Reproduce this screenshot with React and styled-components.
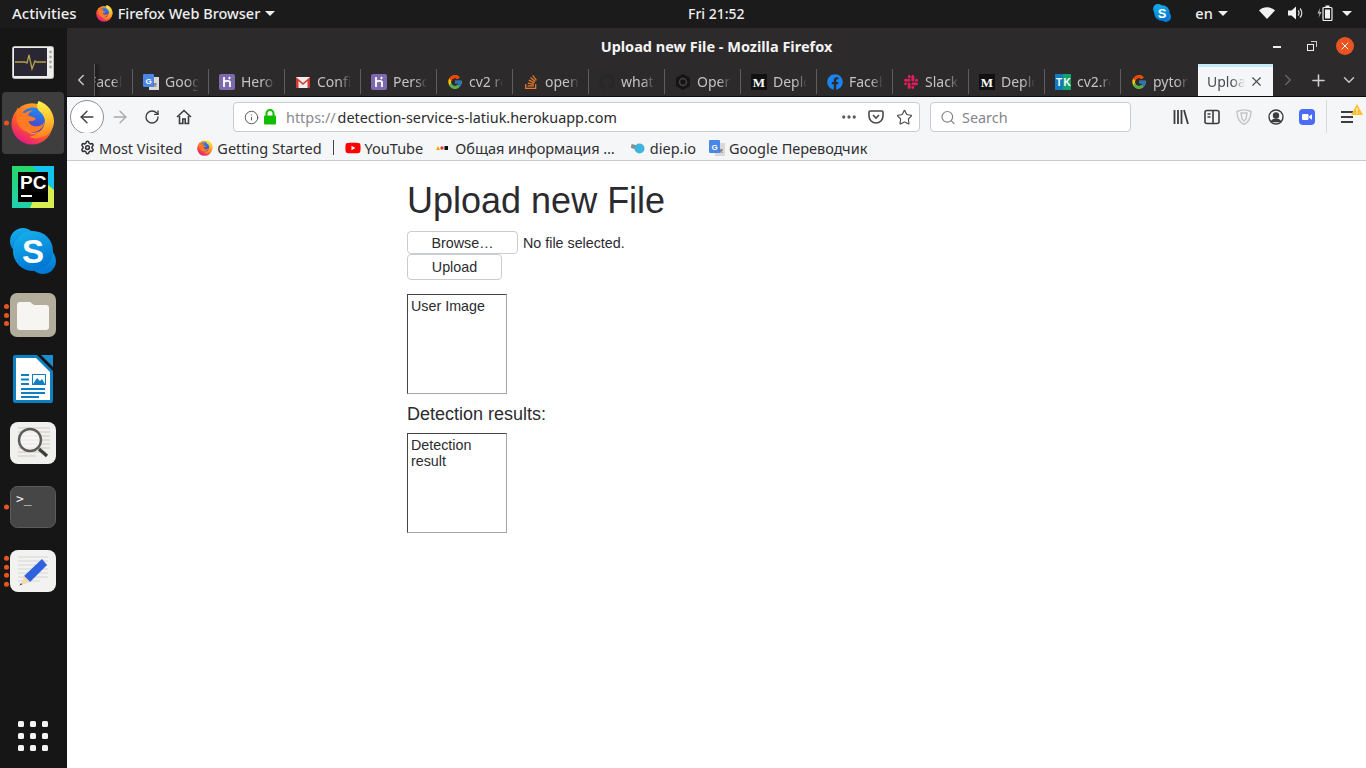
import React from 'react';
import styled, { createGlobalStyle } from 'styled-components';
import {
  ArrowLeft, ArrowRight, RotateCw, Info, Star, Search, Ellipsis, X, Plus,
  ChevronDown, ChevronLeft, ChevronRight, Settings,
} from 'lucide-react';
import { FcGoogle } from 'react-icons/fc';
import { FaFacebook, FaStackOverflow, FaGithub, FaSlack, FaYoutube } from 'react-icons/fa';

const UI_FONT = '"Noto Sans", "Open Sans", sans-serif';
const PAGE_FONT = '"Liberation Sans", Arial, sans-serif';

const GlobalStyle = createGlobalStyle`
  html, body { margin: 0; padding: 0; height: 100%; background: #fff; overflow: hidden; }
  #root { height: 100%; }
  * { box-sizing: border-box; }
`;

/* ---------- drawn logos ---------- */

const FirefoxLogo = ({ size = 44, id = 'ff' }) => (
  <svg width={size} height={size} viewBox="0 0 48 48">
    <defs>
      <linearGradient id={`${id}a`} x1="0.7" y1="0.1" x2="0.2" y2="0.95">
        <stop offset="0" stopColor="#ffa31f" />
        <stop offset="0.55" stopColor="#ff5a2a" />
        <stop offset="1" stopColor="#e31587" />
      </linearGradient>
      <linearGradient id={`${id}b`} x1="0.6" y1="0" x2="0.3" y2="1">
        <stop offset="0" stopColor="#1d8cf0" />
        <stop offset="1" stopColor="#5a2bc9" />
      </linearGradient>
      <linearGradient id={`${id}c`} x1="0.4" y1="0" x2="0.5" y2="1">
        <stop offset="0" stopColor="#fff44f" />
        <stop offset="0.55" stopColor="#ffbd2e" />
        <stop offset="1" stopColor="#ff7a1f" />
      </linearGradient>
    </defs>
    <circle cx="23" cy="25" r="22.500" fill={`url(#${id}a)`} />
    <circle cx="24" cy="21" r="14" fill={`url(#${id}b)`} />
    <path d="M7 7c1 4 4 6 8 6 3-2 6-3 9-3-3 2-6 4-5 6 2 1 6 1 8 3-1 3-5 3-8 3 1 4 7 7 12 5 3-1 5-3 6-5-1 7-8 13-16 12C12 34 6 26 6 18c0-4 0-8 1-11z" fill="#ff7a22" />
    <path d="M30 0C27 6 29 10 33 13 37 17 38 22 36 27 33 34 27 38 20 39 30 44 46 38 47 23 47 12 40 3 30 0z" fill={`url(#${id}c)`} />
    <path d="M15 30c4 5 10 6 16 3-4 4-11 5-16-3z" fill="#ffcf3a" opacity=".7" />
  </svg>
);

const MonitorLogo = () => (
  <svg width="42" height="33" viewBox="0 0 42 33">
    <rect x="0.5" y="0.5" width="41" height="32" rx="2" fill="#eeeeec" stroke="#bdbdb8" />
    <rect x="2" y="2" width="33" height="28" fill="#2a2735" />
    <path d="M3 16h10l2 1 2-8 3 14 3-8 1 1h10" fill="none" stroke="#b5a24a" strokeWidth="1.3" />
    <circle cx="38.5" cy="6" r="1.4" fill="#a9a9a5" />
    <circle cx="38.5" cy="11" r="1.4" fill="#a9a9a5" />
    <circle cx="38.5" cy="16" r="1.4" fill="#a9a9a5" />
    <circle cx="38.5" cy="21" r="1.4" fill="#a9a9a5" />
  </svg>
);

const PyCharmLogo = () => (
  <svg width="42" height="42" viewBox="0 0 42 42">
    <defs>
      <linearGradient id="pcg" x1="0" y1="1" x2="0.2" y2="0">
        <stop offset="0" stopColor="#1fd0b0" />
        <stop offset="1" stopColor="#27d868" />
      </linearGradient>
    </defs>
    <rect width="42" height="42" fill="url(#pcg)" />
    <path d="M20 0h22v24z" fill="#13c4ea" />
    <path d="M30 14l12 10v18H18z" fill="#d8ee50" />
    <rect x="6" y="6" width="30" height="30" fill="#000" />
    <text x="8" y="23" fontFamily={PAGE_FONT} fontWeight="700" fontSize="19" fill="#fff">PC</text>
    <rect x="9" y="29" width="11" height="2" fill="#fff" />
  </svg>
);

const SkypeLogo = ({ size = 46, id = 'sk' }) => (
  <svg width={size} height={size} viewBox="0 0 46 46">
    <defs>
      <linearGradient id={id} x1="0" y1="0" x2="0.4" y2="1">
        <stop offset="0" stopColor="#19b5ee" />
        <stop offset="1" stopColor="#0078d4" />
      </linearGradient>
    </defs>
    <circle cx="13" cy="13" r="13" fill={`url(#${id})`} />
    <circle cx="33" cy="33" r="13" fill={`url(#${id})`} />
    <circle cx="23" cy="23" r="20" fill={`url(#${id})`} />
    <text x="23" y="35" textAnchor="middle" fontFamily={PAGE_FONT} fontWeight="700" fontSize="33" fill="#fff">S</text>
  </svg>
);

const FilesLogo = () => (
  <svg width="46" height="44" viewBox="0 0 46 44">
    <rect width="46" height="44" rx="7" fill="#b3ad9c" />
    <path d="M7 12a3 3 0 013-3h10l4 3h12a3 3 0 013 3v19a3 3 0 01-3 3H10a3 3 0 01-3-3z" fill="#f7f5f2" />
  </svg>
);

const WriterLogo = () => (
  <svg width="40" height="48" viewBox="0 0 40 48">
    <path d="M2 0h22l16 16v30a2 2 0 01-2 2H2a2 2 0 01-2-2V2a2 2 0 012-2z" fill="#0f7fc4" />
    <path d="M3 3h20l14 14v28H3z" fill="#fff" />
    <path d="M28 0h12v12z" fill="#1a8ccf" />
    <path d="M8 19h8v2H8zM8 23.500h8v2H8zM8 28h8v2H8zM8 33h24v2H8zM8 37h24v2H8zM8 41h18v2H8z" fill="#0f7fc4" />
    <rect x="19.500" y="19.500" width="13" height="10" fill="#fff" stroke="#0f7fc4" />
    <path d="M20 29l4-6 3 3 2-2 3 5z" fill="#0f7fc4" />
  </svg>
);

const LensLogo = () => (
  <svg width="46" height="42" viewBox="0 0 46 42">
    <rect width="46" height="42" rx="8" fill="#f0f0ee" />
    <path d="M8 6h32M8 10h32M8 14h32M8 18h32M8 22h32M8 26h32M8 30h28M8 34h18" stroke="#cfcabc" strokeWidth="1" />
    <circle cx="20" cy="18" r="11" fill="#fafafa" fillOpacity=".6" stroke="#5c5c5a" strokeWidth="2.4" />
    <path d="M29 27l8 7" stroke="#3f3f3d" strokeWidth="3.400" />
  </svg>
);

const TerminalLogo = () => (
  <svg width="46" height="42" viewBox="0 0 46 42">
    <rect x="0.5" y="0.5" width="45" height="41" rx="7" fill="#464646" stroke="#5c5c5c" />
    <text x="6" y="17" fontFamily='"DejaVu Sans Mono", monospace' fontSize="13" fill="#eee">&gt;_</text>
  </svg>
);

const GeditLogo = () => (
  <svg width="46" height="42" viewBox="0 0 46 42">
    <rect width="46" height="42" rx="8" fill="#f2f2f0" />
    <path d="M8 7h30M8 11h30M8 15h30M8 19h30M8 23h30M8 27h30M8 31h22" stroke="#d4d4d2" strokeWidth="1" />
    <path d="M32 9l5 6-17 17-6-6z" fill="#2f62dd" />
    <path d="M14 26l6 6-9 3z" fill="#f7d7ae" />
    <path d="M11 33l-1.500 2.500 2.500-1z" fill="#333" />
  </svg>
);

const HerokuIcon = () => (
  <svg width="16" height="16" viewBox="0 0 16 16">
    <rect width="16" height="16" rx="2" fill="#7f69ae" />
    <path d="M5 3v10M5 8c2-1.500 6-1.500 6 .5V13M11 3l-1 2" fill="none" stroke="#fff" strokeWidth="1.800" />
  </svg>
);

const GmailIcon = () => (
  <svg width="16" height="16" viewBox="0 0 16 16">
    <rect x="1" y="3" width="14" height="11" fill="#eee" />
    <path d="M1 14V3l7 6 7-6v11h-2.500V7L8 11 3.500 7v7z" fill="#d33a2f" />
  </svg>
);

const TranslateIcon = ({ size = 16 }) => (
  <svg width={size} height={size} viewBox="0 0 16 16">
    <rect x="6" y="3" width="10" height="13" fill="#d9d9d9" />
    <rect width="11" height="13" rx="1" fill="#4a86e8" />
    <text x="5.500" y="10" textAnchor="middle" fontFamily={PAGE_FONT} fontWeight="700" fontSize="8" fill="#fff">G</text>
    <path d="M10 10h4M12 9v1M13 10l-2.500 3M11 10.500l2.500 2.500" stroke="#666" strokeWidth=".8" fill="none" />
  </svg>
);

const MediumIcon = () => (
  <svg width="16" height="16" viewBox="0 0 16 16">
    <rect width="16" height="16" fill="#111" />
    <text x="8" y="12.500" textAnchor="middle" fontFamily='"Liberation Serif", serif' fontWeight="700" fontSize="13" fill="#fff">M</text>
  </svg>
);

const TkIcon = () => (
  <svg width="16" height="16" viewBox="0 0 16 16">
    <rect width="8" height="16" fill="#1479bd" />
    <rect x="8" width="8" height="16" fill="#12a36b" />
    <text x="4" y="12" textAnchor="middle" fontFamily={PAGE_FONT} fontWeight="700" fontSize="10" fill="#fff">T</text>
    <text x="12" y="12" textAnchor="middle" fontFamily={PAGE_FONT} fontWeight="700" fontSize="10" fill="#fff">K</text>
  </svg>
);

const OpenIcon = () => (
  <svg width="16" height="16" viewBox="0 0 16 16">
    <path d="M8 0l7 4v8l-7 4-7-4V4z" fill="#151515" />
    <circle cx="8" cy="8" r="3.500" fill="none" stroke="#444" strokeWidth="1.500" />
  </svg>
);

const HomeIcon = () => (
  <svg width="16" height="16" viewBox="0 0 16 16" fill="none" stroke="#3d3d3f" strokeWidth="1.600">
    <path d="M1 8l7-6.500L15 8" />
    <path d="M3.500 7v7.500h3.300V10h2.400v4.500h3.300V7" />
  </svg>
);

const PadlockIcon = () => (
  <svg width="14" height="16" viewBox="0 0 14 16">
    <path d="M3.500 7V4.500a3.500 3.500 0 017 0V7" fill="none" stroke="#12bc00" strokeWidth="2" />
    <rect x="1" y="6.500" width="12" height="9" rx="1" fill="#12bc00" />
  </svg>
);

const PocketIcon = () => (
  <svg width="16" height="16" viewBox="0 0 16 16" fill="none" stroke="#4a4a4c" strokeWidth="1.600">
    <path d="M2 2h12a1 1 0 011 1v4a7 7 0 01-14 0V3a1 1 0 011-1z" />
    <path d="M5 6l3 3 3-3" />
  </svg>
);

const LibraryIcon = () => (
  <svg width="16" height="16" viewBox="0 0 16 16" stroke="#3d3d3f" strokeWidth="1.800" fill="none">
    <path d="M1.500 1v14M5 1v14M8.500 1v14M11 1l4 14" />
  </svg>
);

const SidebarIcon = () => (
  <svg width="16" height="16" viewBox="0 0 16 16" fill="none" stroke="#3d3d3f" strokeWidth="1.600">
    <rect x="1" y="1.500" width="14" height="13" rx="2" />
    <path d="M9 1.500v13M3.500 5h3M3.500 8h3" />
  </svg>
);

const ShieldIcon = () => (
  <svg width="16" height="16" viewBox="0 0 16 16" fill="none" stroke="#c4c4c4" strokeWidth="1.400">
    <path d="M1 2.500C5 .5 11 .5 15 2.500c0 6-2 10.500-7 13C3 13 1 8.500 1 2.500z" />
    <path d="M5 4h6l-1 6-2 2-2-2z" />
  </svg>
);

const AccountIcon = () => (
  <svg width="16" height="16" viewBox="0 0 16 16" fill="none" stroke="#3d3d3f" strokeWidth="1.400">
    <circle cx="8" cy="8" r="7" />
    <circle cx="8" cy="6.500" r="2.500" fill="#3d3d3f" />
    <path d="M3.500 12.500C5 9.500 11 9.500 12.500 12.500z" fill="#3d3d3f" />
  </svg>
);

const ZoomIcon = () => (
  <svg width="16" height="16" viewBox="0 0 16 16">
    <rect width="16" height="16" rx="4" fill="#4a6cf7" />
    <rect x="3" y="5" width="6.500" height="6" rx="1.200" fill="#fff" />
    <path d="M10.200 7.200l2.800-2v5.600l-2.800-2z" fill="#fff" />
  </svg>
);

const HamburgerIcon = () => (
  <svg width="14" height="14" viewBox="0 0 14 14" stroke="#3d3d3f" strokeWidth="1.800">
    <path d="M1 2h12M1 7h12M1 12h12" />
  </svg>
);

const WarnBadge = () => (
  <svg width="12" height="11" viewBox="0 0 12 11">
    <path d="M6 0l6 11H0z" fill="#ffbf2e" />
    <path d="M6 4v3.500M6 8.500v1.200" stroke="#fff" strokeWidth="1.100" />
  </svg>
);

const WifiIcon = () => (
  <svg width="16" height="12" viewBox="0 0 16 12">
    <path d="M0 3.500C4.500-.8 11.500-.8 16 3.500L8 12z" fill="#f2f2f2" />
  </svg>
);

const SpeakerIcon = () => (
  <svg width="16" height="14" viewBox="0 0 16 14">
    <path d="M0 4.500h3.500L8 .5v13L3.500 9.500H0z" fill="#f2f2f2" />
    <path d="M10 4.500a3.500 3.500 0 010 5M12 2.500a6.500 6.500 0 010 9" fill="none" stroke="#dcdcdc" strokeWidth="1.200" />
  </svg>
);

const BatteryIcon = () => (
  <svg width="16" height="16" viewBox="0 0 16 16">
    <path d="M3 3L0.500 8.500H2.500L1.500 13L4.500 7H2.500z" fill="#bbb" />
    <rect x="6" y="2.500" width="9" height="13" rx="1" fill="none" stroke="#f2f2f2" strokeWidth="1.200" />
    <rect x="8.500" y="0.500" width="4" height="2" fill="#f2f2f2" />
    <rect x="8" y="4.500" width="5" height="9" fill="#f2f2f2" />
  </svg>
);

const DiepIcon = () => (
  <svg width="15" height="12" viewBox="0 0 15 12">
    <rect x="0" y="3" width="8" height="4" fill="#8c8c8c" transform="rotate(15 4 5)" />
    <circle cx="8.500" cy="6.500" r="5" fill="#3fb4dc" />
  </svg>
);

const DotsIcon = () => (
  <svg width="15" height="6" viewBox="0 0 15 6">
    <path d="M0 5l2-4 2 4z" fill="#f4a300" />
    <circle cx="6" cy="3" r="1.700" fill="#e33" />
    <rect x="8.500" y="1" width="3.500" height="4" fill="#111" />
  </svg>
);

/* ---------- desktop shell ---------- */

const Desktop = styled.div`
  display: flex;
  flex-direction: column;
  width: 1366px;
  height: 768px;
  overflow: hidden;
  background: #fff;
`;

const TopBar = styled.header`
  display: flex;
  align-items: center;
  flex: 0 0 28px;
  padding: 0 15px 2px 12px;
  background: #1b1b1b;
  color: #efefef;
  font: 500 14.500px ${UI_FONT};
  white-space: nowrap;
`;

const TopLabel = styled.span`
  flex: 0 0 64px;
  font-size: 15px;
`;

const TopMenu = styled.span`
  display: flex;
  align-items: center;
  flex: none;
  gap: ${(p) => p.$gap || 5}px;
  margin-left: ${(p) => p.$left || 0}px;
`;

const AppMenu = styled(TopMenu)`
  flex: 0 0 179px;
`;

const Clock = styled.span`
  flex: 0 0 58px;
  margin-left: 412px;
  text-align: center;
  font-size: 14px;
`;

const Caret = styled.i`
  display: block;
  flex: none;
  width: 0;
  height: 0;
  margin-left: ${(p) => p.$left || 0}px;
  border-left: 5px solid transparent;
  border-right: 5px solid transparent;
  border-top: 5px solid #efefef;
`;

const Body = styled.div`
  display: flex;
  flex: 1;
  min-height: 0;
`;

const Dock = styled.nav`
  display: flex;
  flex-direction: column;
  align-items: center;
  flex: 0 0 67px;
  background: #161616;
  padding-bottom: 17px;
`;

const DockSlot = styled.div`
  position: relative;
  display: flex;
  align-items: center;
  justify-content: center;
  flex: 0 0 64px;
  width: 62px;
  margin-right: 2px;
  &:first-child {
    flex-basis: 63px;
    padding-top: 5px;
  }
`;

const ActiveTile = styled.div`
  display: flex;
  align-items: center;
  justify-content: center;
  width: 62px;
  height: 62px;
  border-radius: 4px;
  background: #3e3e3e;
`;

const RunDots = styled.div`
  position: absolute;
  left: 2px;
  top: 50%;
  transform: translateY(-50%);
  display: flex;
  flex-direction: column;
  gap: 3.500px;
`;

const RunDot = styled.i`
  display: block;
  width: 5px;
  height: 5px;
  border-radius: 50%;
  background: #e95420;
`;

const AppGrid = styled.div`
  display: grid;
  grid-template-columns: repeat(3, 6px);
  gap: 6px;
  margin-top: auto;
  margin-right: 1px;
  i {
    display: block;
    width: 6px;
    height: 6px;
    border-radius: 1.500px;
    background: #f4f4f4;
  }
`;

const Browser = styled.main`
  display: flex;
  flex-direction: column;
  flex: 1;
  min-width: 0;
`;

const TitleBar = styled.div`
  position: relative;
  display: flex;
  align-items: center;
  justify-content: center;
  flex: 0 0 36px;
  background: #2c2a2b;
  color: #f4f4f4;
  font: 700 14.500px ${UI_FONT};
`;

const WindowButtons = styled.div`
  position: absolute;
  right: 12px;
  top: 9px;
  display: flex;
  align-items: center;
  gap: 21px;
`;

const MinimizeMark = styled.i`
  display: block;
  width: 8px;
  height: 1.500px;
  margin-top: 2px;
  background: #eee;
`;

const RestoreMark = styled.i`
  position: relative;
  display: block;
  width: 7px;
  height: 7px;
  margin: 2px 1px 0 5px;
  border: 1.500px solid #eee;
  &::after {
    content: '';
    position: absolute;
    right: -3.500px;
    top: -3.500px;
    width: 5px;
    height: 5px;
    border-top: 1px solid #ccc;
    border-right: 1px solid #ccc;
  }
`;

const CloseDot = styled.span`
  display: flex;
  align-items: center;
  justify-content: center;
  width: 18px;
  height: 18px;
  border-radius: 50%;
  background: #e95420;
  color: #fff;
`;

const TabBar = styled.div`
  display: flex;
  align-items: stretch;
  flex: 0 0 33px;
  background: #2c2a2b;
  border-bottom: 1px solid #0c0c0c;
  overflow: hidden;
`;

const ScrollButton = styled.div`
  display: flex;
  align-items: center;
  justify-content: center;
  flex: 0 0 ${(p) => p.$w}px;
  color: ${(p) => p.$color || '#c8c8c8'};
  border-right: ${(p) => (p.$edge ? '1px solid #5e5e5e' : '0')};
  box-shadow: ${(p) => (p.$edge ? '3px 0 4px rgba(0,0,0,.35)' : 'none')};
  z-index: 1;
`;

const Tab = styled.div`
  display: flex;
  align-items: center;
  gap: 6px;
  flex: 0 0 ${(p) => p.$w || 76}px;
  padding: 0 9px 0 10px;
  margin: ${(p) => (p.$active ? '0' : '5px 0 2px')};
  border-right: ${(p) => (p.$plain ? '0' : '1px solid #5e5e5e')};
  color: #c4c4c4;
  font: 14px ${UI_FONT};
  overflow: hidden;
`;

const ClippedTab = styled(Tab)`
  padding: 0 10px 0 0;
`;

const ActiveTab = styled(Tab)`
  gap: 4px;
  padding: 0 9px;
  background: #f5f6f7;
  border-top: 3px solid #c6eafa;
  border-right: 0;
  color: #4a4a4f;
  svg { flex: none; }
`;

const TabIcon = styled.span`
  display: flex;
  flex: none;
  width: 16px;
  height: 16px;
  color: ${(p) => p.$color || 'inherit'};
`;

const TabTitle = styled.span`
  flex: 1;
  min-width: 0;
  white-space: nowrap;
  overflow: hidden;
  text-indent: ${(p) => p.$shift || 0}px;
  -webkit-mask-image: linear-gradient(to right, #000 65%, transparent);
  mask-image: linear-gradient(to right, #000 65%, transparent);
`;

const NavBar = styled.div`
  display: flex;
  align-items: center;
  flex: 0 0 36px;
  min-height: 0;
  padding: 4px 0 0 3px;
  background: #f5f6f7;
`;

const BackButton = styled.div`
  display: flex;
  align-items: center;
  justify-content: center;
  flex: none;
  width: 34px;
  height: 34px;
  border-radius: 50%;
  background: #fff;
  border: 1px solid #8f8f92;
  color: #3d3d3f;
`;

const NavIcon = styled.span`
  display: flex;
  align-items: center;
  justify-content: center;
  flex: none;
  width: ${(p) => p.$w || 32}px;
  color: ${(p) => p.$color || '#3d3d3f'};
`;

const UrlBar = styled.div`
  display: flex;
  align-items: center;
  flex: 0 0 ${(p) => p.$w}px;
  height: 30px;
  margin-left: ${(p) => p.$left || 0}px;
  padding: 0 5px 0 9px;
  background: #fff;
  border: 1px solid #c9cbcf;
  border-radius: 4px;
  font: 14.400px ${UI_FONT};
  color: #2a2a2e;
  white-space: nowrap;
`;

const LockSlot = styled.span`
  display: flex;
  margin-left: 4px;
`;

const UrlScheme = styled.span`
  color: #8a8a8f;
  margin: 0 2px 0 9px;
`;

const UrlEnd = styled.div`
  display: flex;
  align-items: center;
  gap: 10px;
  margin-left: auto;
`;

const SearchHint = styled.span`
  margin-left: 6px;
  color: #85858a;
`;

const ToolGroup = styled.div`
  display: flex;
  align-items: center;
  margin-left: 34px;
`;

const ToolDivider = styled.i`
  display: block;
  width: 1px;
  height: 34px;
  margin: 0 4px;
  background: #d8d9db;
`;

const BadgeHolder = styled.span`
  position: relative;
  display: flex;
  margin-left: 9px;
  svg:last-child {
    position: absolute;
    right: -9px;
    top: -6px;
  }
`;

const Bookmarks = styled.div`
  display: flex;
  align-items: center;
  flex: 0 0 28px;
  padding: 2px 0 0 13px;
  background: #f5f6f7;
  border-bottom: 1px solid #c8cad0;
  color: #2f2f33;
  font: 14.500px ${UI_FONT};
`;

const Bookmark = styled.span`
  display: flex;
  align-items: center;
  gap: 4px;
  margin-right: ${(p) => p.$right || 12}px;
  white-space: nowrap;
  svg { flex: none; }
`;

const BookmarkDivider = styled.i`
  display: block;
  width: 1px;
  height: 15px;
  margin-right: 11px;
  background: #44444a;
`;

/* ---------- the page itself ---------- */

const Page = styled.section`
  flex: 1;
  padding: 17px 0 0 340px;
  background: #fff;
  color: #2b2b2f;
  font: 14.300px/16px ${PAGE_FONT};
`;

const Heading = styled.h1`
  margin: 0 0 7px;
  font: 400 36px/46px ${PAGE_FONT};
  color: #2b2b2f;
`;

const FileRow = styled.div`
  display: flex;
  align-items: center;
  gap: 5px;
  height: 23px;
`;

const PlainButton = styled.button`
  display: block;
  width: ${(p) => p.$w}px;
  height: ${(p) => p.$h}px;
  padding: 0;
  background: #fff;
  border: 1px solid #c9cdd2;
  border-radius: 4px;
  color: #2b2b2f;
  font: 14.300px ${PAGE_FONT};
`;

const FrameBox = styled.div`
  width: 100px;
  height: 100px;
  padding: 3px;
  border: 1px solid;
  border-color: #444 #a6a6a6 #a6a6a6 #444;
  margin-top: ${(p) => p.$top || 0}px;
`;

const ResultsLabel = styled.h4`
  margin: 10px 0 9px;
  font: 400 18px/20px ${PAGE_FONT};
`;

const tabs = [
  { icon: <TranslateIcon />, title: 'Google Translate' },
  { icon: <HerokuIcon />, title: 'Heroku' },
  { icon: <GmailIcon />, title: 'Confirm' },
  { icon: <HerokuIcon />, title: 'Personal' },
  { icon: <FcGoogle size={16} />, title: 'cv2 read' },
  { icon: <FaStackOverflow size={16} />, title: 'opencv', color: '#e8792b' },
  { icon: <FaGithub size={16} />, title: 'what is', color: '#25282b' },
  { icon: <OpenIcon />, title: 'OpenCV' },
  { icon: <MediumIcon />, title: 'Deploy' },
  { icon: <FaFacebook size={16} />, title: 'Facebook', color: '#1b84ee' },
  { icon: <FaSlack size={16} />, title: 'Slack', color: '#e01e5a' },
  { icon: <MediumIcon />, title: 'Deploy' },
  { icon: <TkIcon />, title: 'cv2.read' },
  { icon: <FcGoogle size={16} />, title: 'pytorch', plain: true },
];

const dockDots = (count) => (count ? (
  <RunDots>
    {Array.from({ length: count }, (_, i) => <RunDot key={i} />)}
  </RunDots>
) : null);

const App = () => (
  <Desktop>
    <GlobalStyle />
    <TopBar>
      <TopLabel>Activities</TopLabel>
      <AppMenu $left={19}>
        <FirefoxLogo size={17} id="ffbar" />
        Firefox Web Browser
        <Caret />
      </AppMenu>
      <Clock>Fri 21:52</Clock>
      <TopMenu $left={408}><SkypeLogo size={18} id="skbar" /></TopMenu>
      <TopMenu $left={24}>en<Caret /></TopMenu>
      <TopMenu $left={31} $gap={13}>
        <WifiIcon />
        <SpeakerIcon />
        <BatteryIcon />
        <Caret $left={-4} />
      </TopMenu>
    </TopBar>
    <Body>
      <Dock>
        <DockSlot><MonitorLogo /></DockSlot>
        <DockSlot>{dockDots(1)}<ActiveTile><FirefoxLogo /></ActiveTile></DockSlot>
        <DockSlot><PyCharmLogo /></DockSlot>
        <DockSlot><SkypeLogo /></DockSlot>
        <DockSlot>{dockDots(3)}<FilesLogo /></DockSlot>
        <DockSlot><WriterLogo /></DockSlot>
        <DockSlot><LensLogo /></DockSlot>
        <DockSlot>{dockDots(1)}<TerminalLogo /></DockSlot>
        <DockSlot>{dockDots(4)}<GeditLogo /></DockSlot>
        <AppGrid>
          {Array.from({ length: 9 }, (_, i) => <i key={i} />)}
        </AppGrid>
      </Dock>
      <Browser>
        <TitleBar>
          Upload new File - Mozilla Firefox
          <WindowButtons>
            <MinimizeMark />
            <RestoreMark />
            <CloseDot><X size={12} strokeWidth={2} /></CloseDot>
          </WindowButtons>
        </TitleBar>
        <TabBar>
          <ScrollButton $w={28} $edge><ChevronLeft size={18} /></ScrollButton>
          <ClippedTab $w={38}><TabTitle $shift={-6}>Facebook</TabTitle></ClippedTab>
          {tabs.map((tab, i) => (
            <Tab key={i} $plain={tab.plain} $w={tab.plain ? 77 : 76}>
              <TabIcon $color={tab.color}>{tab.icon}</TabIcon>
              <TabTitle>{tab.title}</TabTitle>
            </Tab>
          ))}
          <ActiveTab $active $w={75}>
            <TabTitle>Upload new File</TabTitle>
            <X size={15} strokeWidth={1.800} />
          </ActiveTab>
          <ScrollButton $w={30} $color="#66666a"><ChevronRight size={18} /></ScrollButton>
          <ScrollButton $w={30} $color="#d0d0d0"><Plus size={19} /></ScrollButton>
          <ScrollButton $w={32} $color="#c8c8c8"><ChevronDown size={18} /></ScrollButton>
        </TabBar>
        <NavBar>
          <BackButton><ArrowLeft size={20} strokeWidth={1.600} /></BackButton>
          <NavIcon $color="#a9a9ad"><ArrowRight size={20} strokeWidth={1.600} /></NavIcon>
          <NavIcon><RotateCw size={16} strokeWidth={2} /></NavIcon>
          <NavIcon><HomeIcon /></NavIcon>
          <UrlBar $w={687} $left={33}>
            <NavIcon $w={16} $color="#5a5a5e"><Info size={15} strokeWidth={1.600} /></NavIcon>
            <LockSlot><PadlockIcon /></LockSlot>
            <UrlScheme>https://</UrlScheme>detection-service-s-latiuk.herokuapp.com
            <UrlEnd>
              <NavIcon $w={18} $color="#5a5a5e"><Ellipsis size={18} strokeWidth={2.400} /></NavIcon>
              <PocketIcon />
              <NavIcon $w={20} $color="#4a4a4c"><Star size={17} strokeWidth={1.600} /></NavIcon>
            </UrlEnd>
          </UrlBar>
          <UrlBar $w={201} $left={10}>
            <NavIcon $w={16} $color="#85858a"><Search size={17} strokeWidth={1.800} /></NavIcon>
            <SearchHint>Search</SearchHint>
          </UrlBar>
          <ToolGroup>
            <NavIcon $w={31}><LibraryIcon /></NavIcon>
            <NavIcon $w={32}><SidebarIcon /></NavIcon>
            <NavIcon $w={32}><ShieldIcon /></NavIcon>
            <NavIcon $w={31}><AccountIcon /></NavIcon>
            <NavIcon $w={31}><ZoomIcon /></NavIcon>
            <ToolDivider />
            <BadgeHolder><HamburgerIcon /><WarnBadge /></BadgeHolder>
          </ToolGroup>
        </NavBar>
        <Bookmarks>
          <Bookmark $right={15}><Settings size={15} strokeWidth={2.400} />Most Visited</Bookmark>
          <Bookmark $right={11}><FirefoxLogo size={16} id="ffmark" />Getting Started</Bookmark>
          <BookmarkDivider />
          <Bookmark $right={13}><FaYoutube size={16} color="#f00" />YouTube</Bookmark>
          <Bookmark $right={16}><DotsIcon />Общая информация …</Bookmark>
          <Bookmark $right={13}><DiepIcon />diep.io</Bookmark>
          <Bookmark><TranslateIcon />Google Переводчик</Bookmark>
        </Bookmarks>
        <Page>
          <Heading>Upload new File</Heading>
          <FileRow>
            <PlainButton $w={111} $h={23} type="button">Browse…</PlainButton>
            <span>No file selected.</span>
          </FileRow>
          <PlainButton $w={95} $h={26} type="button">Upload</PlainButton>
          <FrameBox $top={14}>User Image</FrameBox>
          <ResultsLabel>Detection results:</ResultsLabel>
          <FrameBox>Detection result</FrameBox>
        </Page>
      </Browser>
    </Body>
  </Desktop>
);

export default App;
